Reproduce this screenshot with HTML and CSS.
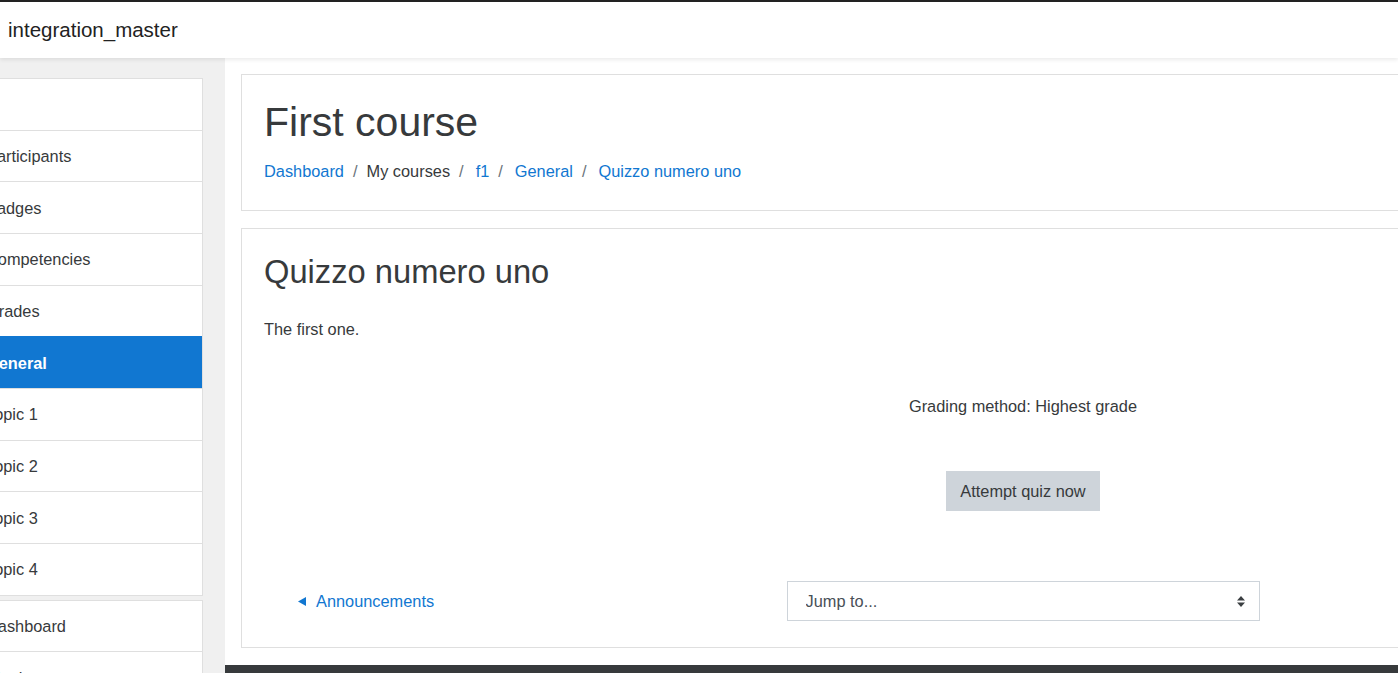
FILE: index.html
```html
<!DOCTYPE html>
<html lang="en">
<head>
    <meta charset="UTF-8">
    <title>Quizzo numero uno</title>
    <link rel="stylesheet" href="styles.css">
</head>
<body>
    <header class="navbar">
        <span class="site-name">integration_master</span>
    </header>
    <div class="page">
        <aside class="drawer">
            <ul class="nav-list">
                <li>&nbsp;</li>
                <li>Participants</li>
                <li>Badges</li>
                <li>Competencies</li>
                <li>Grades</li>
                <li class="active">General</li>
                <li>Topic 1</li>
                <li>Topic 2</li>
                <li>Topic 3</li>
                <li>Topic 4</li>
            </ul>
            <ul class="nav-list">
                <li>Dashboard</li>
                <li>Site home</li>
            </ul>
        </aside>
        <div class="main">
            <div class="region">
                <section class="card page-header">
                    <h1>First course</h1>
                    <ol class="breadcrumb">
                        <li><a href="#">Dashboard</a></li>
                        <li>My courses</li>
                        <li class="node"><a href="#">f1</a></li>
                        <li class="node"><a href="#">General</a></li>
                        <li class="node"><a href="#">Quizzo numero uno</a></li>
                    </ol>
                </section>
                <section class="card activity">
                    <h2>Quizzo numero uno</h2>
                    <p class="intro">The first one.</p>
                    <p class="grading">Grading method: Highest grade</p>
                    <div class="attempt">
                        <button class="btn-attempt">Attempt quiz now</button>
                    </div>
                    <div class="activity-nav">
                        <div class="prev">
                            <a href="#"><svg class="tri" width="8" height="9" viewBox="0 0 8 9"><path d="M0 4.5 L8 0 L8 9 Z" fill="#1177d1"/></svg>Announcements</a>
                        </div>
                        <div class="jump">
                            <select class="jump-select">
                                <option>Jump to...</option>
                            </select>
                            <svg class="jump-arrow" width="8" height="11" viewBox="0 0 8 11"><path d="M4 0 L8 4.5 L0 4.5 Z M0 6.5 L8 6.5 L4 11 Z" fill="#3b3f42"/></svg>
                        </div>
                        <div></div>
                    </div>
                </section>
            </div>
            <footer class="footer"></footer>
        </div>
    </div>
</body>
</html>
```

FILE: styles.css
```css
html, body { margin: 0; padding: 0; }
body { font-family: "Liberation Sans", Arial, sans-serif; font-size: 16.35px; color: #373a3c; background: #fff; overflow: hidden; height: 673px; }
a { color: #1177d1; text-decoration: none; }
ul, ol, p, h1, h2 { margin: 0; padding: 0; list-style: none; font-weight: normal; }

/* navbar */
.navbar { position: relative; z-index: 2; height: 55px; border-top: 2px solid #222; background: #fff; display: flex; align-items: center; padding-left: 8px; padding-bottom: 1px; box-sizing: content-box; box-shadow: 0 2px 4px rgba(0, 0, 0, .08); }
.site-name { font-size: 20.5px; color: #222; }

/* layout */
.page { display: flex; align-items: stretch; height: 615px; }
.drawer { flex: 0 0 285px; margin-left: -60px; box-sizing: border-box; padding: 20px 22px 0 25px; background: #f0f0f0; }
.main { flex: 0 0 1596px; display: flex; flex-direction: column; }
.region { padding: 16px 16px 17px 16px; }
.footer { flex: 1; background: #373a3c; }

/* drawer lists */
.nav-list { background: #fff; border: 1px solid rgba(0, 0, 0, .125); margin-bottom: 4px; }
.nav-list li { padding: 13.33px 20px; line-height: 24px; border-top: 1px solid rgba(0, 0, 0, .125); white-space: nowrap; }
.nav-list li:first-child { border-top: none; }
.nav-list li.active { background: #1177d1; color: #fff; font-weight: bold; border-top-color: #1177d1; }

/* cards */
.card { background: #fff; border: 1px solid rgba(0, 0, 0, .125); padding: 20px 22px; margin-bottom: 17px; }
.card:last-child { margin-bottom: 0; }

.page-header h1 { font-size: 41px; line-height: 1.2; margin-top: 3px; }
.breadcrumb { display: flex; line-height: 24px; margin-top: 12px; padding-bottom: 7px; }
.breadcrumb li + li::before { content: "/"; padding: 0 9px; color: #6a737b; }
.breadcrumb li.node a { margin-left: 3px; }

.activity h2 { font-size: 32.7px; line-height: 1.2; margin-top: 2.5px; }
.intro { line-height: 24px; margin-top: 26.5px; }
.grading { line-height: 24px; margin-top: 53px; text-align: center; }
.attempt { text-align: center; margin-top: 53px; }
.btn-attempt { font-family: inherit; font-size: 16.35px; color: #373a3c; background: #ced4da; border: none; height: 40px; padding: 0 14px; }

.activity-nav { display: grid; grid-template-columns: 473px 473px 473px; column-gap: 49.5px; margin-top: 70px; padding-bottom: 6px; }
.prev { display: flex; align-items: center; }
.prev a { margin-left: 34px; display: flex; align-items: center; line-height: 24px; }
.tri { margin-right: 10px; }
.jump { position: relative; }
.jump-select { appearance: none; -webkit-appearance: none; width: 100%; height: 40px; box-sizing: border-box; border: 1px solid #ced4da; border-radius: 0; background: #fff; padding: 0 18px; font-family: inherit; font-size: 16.35px; color: #495057; }
.jump-arrow { position: absolute; right: 15px; top: 15px; }
```
